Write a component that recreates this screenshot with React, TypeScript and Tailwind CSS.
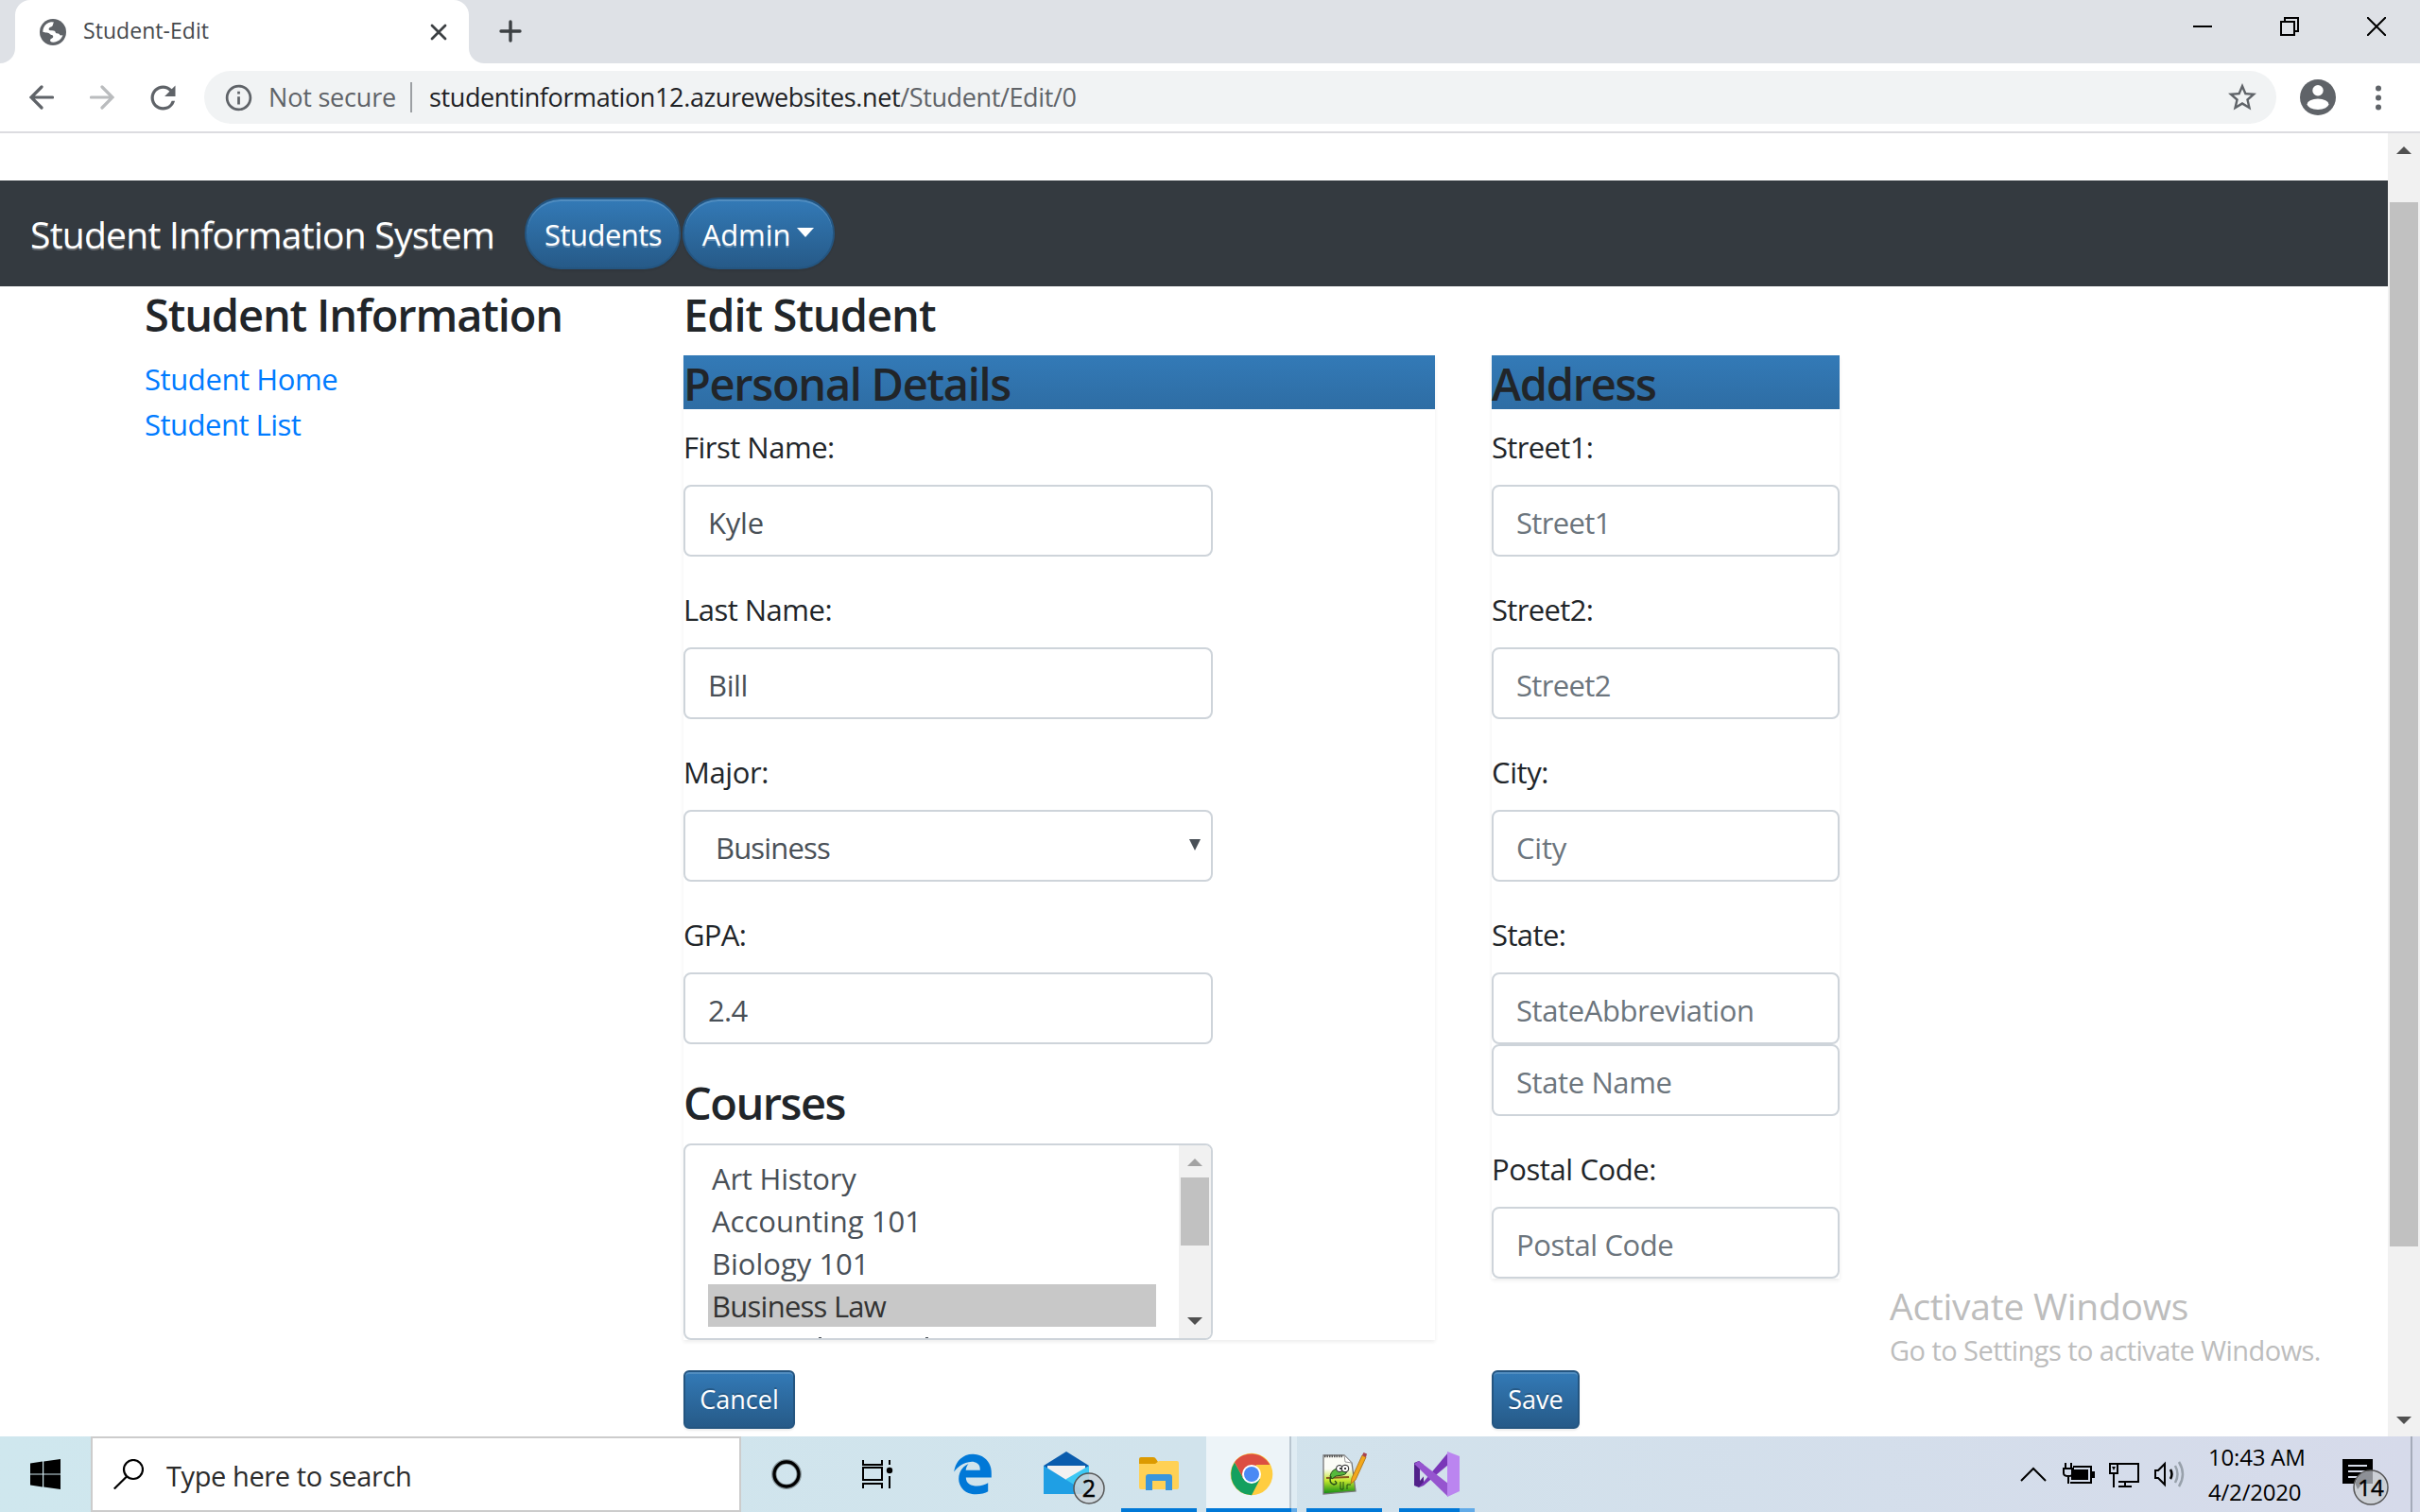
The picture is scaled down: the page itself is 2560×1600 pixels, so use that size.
import type { ReactNode } from "react";
import { MdInfoOutline, MdRefresh, MdStarBorder } from "react-icons/md";
import { FaEdgeLegacy } from "react-icons/fa6";

function Heading({ children, className = "" }: { children: ReactNode; className?: string }) {
  return <h4 className={`whitespace-nowrap text-[47px] leading-[60px] font-semibold ${className}`}>{children}</h4>;
}

function Label({ children, className = "" }: { children: ReactNode; className?: string }) {
  return <label className={`mb-4 block h-12 leading-[49px] whitespace-nowrap ${className}`}>{children}</label>;
}

function Box({ children, className = "" }: { children: ReactNode; className?: string }) {
  return (
    <div
      className={`flex h-[76px] items-center rounded-lg border-2 border-[#ced4da] bg-white pt-1 pl-6 whitespace-nowrap ${className}`}
    >
      {children}
    </div>
  );
}

function TabStrip() {
  return (
    <div className="flex h-[67px] bg-[#dee1e6]">
      <svg className="h-4 w-4 self-end" viewBox="0 0 16 16">
        <path d="M16 0V16H0A16 16 0 0 0 16 0Z" fill="#fff" />
      </svg>
      <div className="flex w-[480px] items-center rounded-t-2xl bg-white pl-[26px]">
        <svg className="h-7 w-7" viewBox="0 0 28 28">
          <circle cx="14" cy="14" r="14" fill="#5f6368" />
          <path
            d="M4.200 9.300C5.500 6.200 8.500 4 12 3.300L15 3.400C14 5 14.200 6 13.600 7.200C12.500 9 10 8.500 9.600 10.500C9.400 12 11 12.200 13 12.300C15.500 12.400 16.500 13 16.800 14.500C17.500 16 20.500 14.800 21 16.600C21.300 18 24 17.500 24.400 17C23.300 21.300 19.300 24.600 14.300 24.700C12 24.700 10.500 23.500 11.200 22C12 20.500 14.500 20.500 14.200 18.500C13.900 16.500 11.500 17.300 10.500 15.800C9.600 14.400 6 15 3.300 13.800C3.300 12 3.600 10.600 4.200 9.300Z"
            fill="#fff"
          />
        </svg>
        <span className="ml-[18px] pb-[2px] text-[23px] tracking-[0.05px] text-[#45494d]">Student-Edit</span>
        <svg className="mr-[23px] ml-auto h-[18px] w-[18px]" viewBox="0 0 18 18" stroke="#3c4043" strokeWidth="2.8" strokeLinecap="round">
          <path d="M2 2L16 16M16 2L2 16" />
        </svg>
      </div>
      <svg className="h-4 w-4 self-end" viewBox="0 0 16 16">
        <path d="M0 0V16H16A16 16 0 0 1 0 0Z" fill="#fff" />
      </svg>
      <svg className="mt-[21px] ml-4 h-6 w-6" viewBox="0 0 24 24" stroke="#3c4043" strokeWidth="3.4" strokeLinecap="round">
        <path d="M12 2V22M2 12H22" />
      </svg>
      <div className="mt-[18px] mr-9 ml-auto flex gap-[72px]">
        <svg className="h-5 w-5" viewBox="0 0 20 20" stroke="#000" strokeWidth="2">
          <path d="M0 10H20" />
        </svg>
        <svg className="h-5 w-5" viewBox="0 0 20 20" stroke="#000" strokeWidth="2" fill="none">
          <path d="M1 5H15V19H1ZM5 5V1H19V15H15" />
        </svg>
        <svg className="h-5 w-5" viewBox="0 0 20 20" stroke="#000" strokeWidth="2">
          <path d="M0 0L20 20M20 0L0 20" />
        </svg>
      </div>
    </div>
  );
}

function Toolbar() {
  return (
    <div className="flex h-[74px] items-center border-b-2 border-[#dcdce0] bg-white pl-[31px]">
      <svg className="h-[26px] w-[26px]" viewBox="0 0 26 26" fill="none" stroke="#5f6368" strokeWidth="3.200" strokeLinecap="round">
        <path d="M24.500 13H2M13 2L2 13L13 24" />
      </svg>
      <svg className="ml-[38px] h-[26px] w-[26px]" viewBox="0 0 26 26" fill="none" stroke="#babcbe" strokeWidth="3.200" strokeLinecap="round">
        <path d="M1.500 13H24M13 2L24 13L13 24" />
      </svg>
      <MdRefresh className="ml-[32px] text-[39px] text-[#5f6368]" />
      <div className="ml-6 flex h-14 w-[2192px] items-center rounded-full bg-[#f1f3f4] text-[27px]">
        <MdInfoOutline className="ml-[20px] text-[33px] text-[#5f6368]" />
        <span className="ml-[15px] w-[150px] tracking-[-0.2px] text-[#5f6368]">Not secure</span>
        <span className="h-8 w-[2px] bg-[#9c9fa3]" />
        <span className="ml-[18px] tracking-[-0.38px] text-[#5f6368]">
          <span className="text-[#202124]">studentinformation12.azurewebsites.net</span>/Student/Edit/0
        </span>
        <MdStarBorder className="mr-[18px] ml-auto text-[36px] text-[#5f6368]" />
      </div>
      <svg className="ml-[25px] h-[38px] w-[38px]" viewBox="0 0 38 38">
        <circle cx="19" cy="19" r="19" fill="#5f6368" />
        <circle cx="19" cy="11.700" r="5.700" fill="#fff" />
        <ellipse cx="19" cy="26.300" rx="11.400" ry="5.700" fill="#fff" />
      </svg>
      <svg className="ml-[42px] h-[27px] w-[6px]" viewBox="0 0 6 27" fill="#5f6368">
        <circle cx="3" cy="3.500" r="3" />
        <circle cx="3" cy="13.500" r="3" />
        <circle cx="3" cy="23.500" r="3" />
      </svg>
    </div>
  );
}

const blueButton =
  "flex items-center justify-center border-2 border-[#245580] bg-linear-to-b from-[#337ab7] to-[#265a88] text-white shadow-[inset_0_2px_0_rgba(255,255,255,0.15),0_2px_2px_rgba(0,0,0,0.075)]";

function Navbar() {
  return (
    <nav className="flex h-28 items-center bg-[#343a40] pl-8 text-white [text-shadow:0_2px_0_rgba(255,255,255,0.25)]">
      <span className="w-[523px] pt-[2px] text-[39px] tracking-[-0.75px] whitespace-nowrap">Student Information System</span>
      <div className={`h-[76px] w-[165px] rounded-full pt-[2px] pl-px tracking-[-0.55px] ${blueButton}`}>Students</div>
      <div className={`ml-[2px] h-[76px] w-[161px] rounded-full pt-[2px] pr-px tracking-[-0.1px] ${blueButton}`}>
        Admin
        <svg className="mb-[4px] ml-[7px] h-[10px] w-[18px]" viewBox="0 0 18 10">
          <path d="M0 0H18L9 10Z" fill="#fff" />
        </svg>
      </div>
    </nav>
  );
}

const bar = "mb-4 h-[57px] bg-linear-to-b from-[#337ab7] to-[#2e6da4]";
const fieldset = "shadow-[0_2px_4px_rgba(0,0,0,0.075)]";

const courses = [
  { name: "Art History", className: "tracking-[-0.2px]" },
  { name: "Accounting 101", className: "" },
  { name: "Biology 101", className: "" },
  { name: "Business Law", className: "bg-[#c8c8c8] tracking-[-0.75px] text-[#333]" },
];

function CourseList() {
  return (
    <div className="flex h-[208px] w-[560px] overflow-hidden rounded-lg border-2 border-[#ced4da] bg-white tracking-normal text-[#495057]">
      <div className="mt-3 mr-6 ml-6 flex-1">
        {courses.map((c) => (
          <div key={c.name} className={`h-[45px] pl-[4px] leading-[47px] ${c.className}`}>
            {c.name}
          </div>
        ))}
        <div className="mt-[11px] flex h-px pl-[117px]">
          <span className="w-[3px] bg-[#495057]" />
          <span className="ml-[110px] w-[3px] bg-[#495057]" />
        </div>
      </div>
      <div className="flex w-[34px] flex-col items-center bg-[#f1f1f1]">
        <svg className="mt-[14px] h-2 w-4" viewBox="0 0 16 8">
          <path d="M0 8H16L8 0Z" fill="#a3a3a3" />
        </svg>
        <div className="mt-3 h-[72px] w-[30px] bg-[#c1c1c1]" />
        <svg className="mt-auto mb-[14px] h-2 w-4" viewBox="0 0 16 8">
          <path d="M0 0H16L8 8Z" fill="#505050" />
        </svg>
      </div>
    </div>
  );
}

function PersonalDetails() {
  return (
    <section className={`w-[795px] ${fieldset}`}>
      <Heading className={`tracking-[-1.3px] ${bar}`}>Personal Details</Heading>
      <Label className="tracking-[-0.5px]">First Name:</Label>
      <Box className="mb-8 w-[560px] tracking-[-0.2px] text-[#495057]">Kyle</Box>
      <Label className="tracking-[-0.5px]">Last Name:</Label>
      <Box className="mb-8 w-[560px] text-[#495057]">Bill</Box>
      <Label>Major:</Label>
      <Box className="mb-8 w-[560px] text-[#495057]">
        <span className="ml-[8px] tracking-[-0.85px]">Business</span>
        <svg className="mr-[11px] mb-[6px] ml-auto h-3 w-3" viewBox="0 0 12 12">
          <path d="M0 0H12L6 12Z" fill="#495057" />
        </svg>
      </Box>
      <Label className="tracking-[-0.7px]">GPA:</Label>
      <Box className="mb-8 w-[560px] tracking-[-0.7px] text-[#495057]">2.4</Box>
      <Heading className="mb-4 h-[57px] tracking-[-1.5px]">Courses</Heading>
      <CourseList />
    </section>
  );
}

function Address() {
  return (
    <section className={`ml-[60px] w-[368px] self-start ${fieldset}`}>
      <Heading className={`tracking-[-1.3px] ${bar}`}>Address</Heading>
      <Label className="tracking-[-0.65px]">Street1:</Label>
      <Box className="mb-8 tracking-[-0.65px] text-[#6c757d]">Street1</Box>
      <Label className="tracking-[-0.65px]">Street2:</Label>
      <Box className="mb-8 tracking-[-0.65px] text-[#6c757d]">Street2</Box>
      <Label>City:</Label>
      <Box className="mb-8 tracking-[-0.2px] text-[#6c757d]">City</Box>
      <Label className="tracking-[-0.6px]">State:</Label>
      <Box className="text-[#6c757d]">StateAbbreviation</Box>
      <Box className="mb-8 text-[#6c757d]">State Name</Box>
      <Label>Postal Code:</Label>
      <Box className="text-[#6c757d]">Postal Code</Box>
    </section>
  );
}

const actionButton = `h-[62px] rounded-md pt-px text-[27px] tracking-normal [text-shadow:0_-2px_0_rgba(0,0,0,0.2)] ${blueButton}`;

function Page() {
  return (
    <div className="relative flex h-[1379px] bg-white">
      <div className="flex w-[2526px] flex-col pt-[50px] text-[31px] text-[#212529]">
        <Navbar />
        <div className="flex pl-[153px] tracking-[-0.4px]">
          <aside className="w-[570px]">
            <Heading className="mb-4 h-[57.6px] tracking-[-1.15px]">Student Information</Heading>
            <ul className="leading-[48px] text-[#007bff]">
              <li>Student Home</li>
              <li className="tracking-[-0.5px]">Student List</li>
            </ul>
          </aside>
          <main>
            <Heading className="mb-4 h-[57px] tracking-[-1px]">Edit Student</Heading>
            <div className="flex">
              <PersonalDetails />
              <Address />
            </div>
            <div className="mt-8 flex">
              <button className={`w-[118px] ${actionButton}`}>Cancel</button>
              <button className={`ml-[737px] w-[93px] ${actionButton}`}>Save</button>
            </div>
          </main>
        </div>
      </div>
      <div className="flex w-[34px] flex-col items-center bg-[#f1f1f1]">
        <svg className="mt-[14px] h-2 w-4" viewBox="0 0 16 8">
          <path d="M0 8H16L8 0Z" fill="#505050" />
        </svg>
        <div className="mt-[51px] h-[1105px] w-[30px] bg-[#c1c1c1]" />
        <svg className="mt-auto mb-[13px] h-2 w-4" viewBox="0 0 16 8">
          <path d="M0 0H16L8 8Z" fill="#505050" />
        </svg>
      </div>
      <div className="absolute top-[1213px] left-[1999px] whitespace-nowrap text-[#bdbdbd]">
        <div className="h-[55px] text-[39px] leading-[56px] tracking-[-0.25px]">Activate Windows</div>
        <div className="text-[29px] leading-[40px] tracking-[-0.55px]">Go to Settings to activate Windows.</div>
      </div>
    </div>
  );
}

function Cell({ children }: { children: ReactNode }) {
  return (
    <svg className="h-20 w-[98px] shrink-0" viewBox="0 0 98 80">
      {children}
    </svg>
  );
}

function Taskbar() {
  return (
    <div className="flex h-20 bg-linear-to-r from-[#cfe7ee] via-[#d1e3ec] via-50% to-[#d6daea]">
      <div className="flex w-24 items-center justify-center">
        <svg className="h-8 w-8" viewBox="0 0 32 32">
          <path d="M0 4.500L13 2.600V15.400H0ZM14.200 2.400L32 0V15.400H14.200ZM0 16.600H13V29.400L0 27.500ZM14.200 16.600H32V32L14.200 29.600Z" />
        </svg>
      </div>
      <div className="flex w-[688px] items-center border-2 border-[#ccc] bg-white pl-[22px]">
        <svg className="h-8 w-8" viewBox="0 0 32 32" fill="none" stroke="#000" strokeWidth="2.200">
          <circle cx="21" cy="11" r="10" />
          <path d="M14 18.500L0.800 31.500" />
        </svg>
        <span className="ml-6 pt-[3px] text-[29px] tracking-[-0.4px] text-[#2b2b2b]">Type here to search</span>
      </div>
      <Cell>
        <circle cx="48" cy="40" r="13.200" fill="none" stroke="#8b9a9f" strokeWidth="5.500" />
        <circle cx="48" cy="40" r="13" fill="none" stroke="#000" strokeWidth="3.300" />
      </Cell>
      <Cell>
        <g fill="none" stroke="#000" strokeWidth="2">
          <path d="M31 25V30H51V25M31 33H51V46H31ZM31 55V50H51V55M59 25V30M59 42V55" />
        </g>
        <circle cx="59" cy="36" r="3.200" />
      </Cell>
      <div className="flex w-[98px] items-center justify-center">
        <FaEdgeLegacy className="text-[44px] text-[#0078d7]" />
      </div>
      <Cell>
        <path d="M26 31L50 16L74 31V40H26Z" fill="#0a5cad" />
        <path d="M30 31H70V45L50 56L30 45Z" fill="#f2f2f2" />
        <path d="M74 31V61H40L50 45Z" fill="#3cc8f4" />
        <path d="M26 31L74 61H26Z" fill="#1f9fe4" />
        <circle cx="74" cy="55" r="16" fill="#ccd3d9" fillOpacity="0.85" stroke="#555" strokeWidth="1.500" />
        <text x="74" y="64" textAnchor="middle" fontSize="25" fontWeight="500" stroke="#000" strokeWidth="0.500">2</text>
      </Cell>
      <Cell>
        <path d="M29 24q0-2 2-2H44q2 0 3 2l2 3v3H29Z" fill="#dc9a00" />
        <path d="M29 29H46l4-3H69q2 0 2 2V54q0 2-2 2H31q-2 0-2-2Z" fill="#ffd155" />
        <path d="M36 57V43q0-3 3-3H61q3 0 3 3V57H57V47H43V57Z" fill="#3a96dd" />
        <path d="M10 76H90V80H10Z" fill="#0078d7" />
      </Cell>
      <Cell>
        <path d="M2 0H90V80H2Z" fill="#edf4f8" />
        <path d="M90 0H92V80H90Z" fill="#b9c6d0" />
        <path d="M92 0H98V80H92Z" fill="#dfecf3" />
        <circle cx="50" cy="40" r="22.300" fill="#ffcd40" />
        <path d="M32 27.500A22.300 22.300 0 0 0 50 62.300L59 45L50 40L41 44Z" fill="#14a05f" />
        <path d="M32 27.200L41.500 45L50 40L55 30H69.300A22.300 22.300 0 0 0 32 27.200Z" fill="#dc4e41" />
        <circle cx="50" cy="40" r="10" fill="#fff" />
        <circle cx="50" cy="40" r="8" fill="#4a8af4" />
        <path d="M2 76H92V80H2Z" fill="#0078d7" />
        <path d="M92 76H98V80H92Z" fill="#62abe8" />
      </Cell>
      <Cell>
        <defs>
          <linearGradient id="pad" x1="0" y1="0" x2="0" y2="1">
            <stop offset="0.350" stopColor="#fbfcf6" />
            <stop offset="0.650" stopColor="#c5e82e" />
            <stop offset="1" stopColor="#0b8a12" />
          </linearGradient>
        </defs>
        <path d="M28 20H50L58 28L62 58L28 61Z" fill="url(#pad)" stroke="#777" strokeWidth="1.300" />
        <path d="M50 20L51 27L58 28Z" fill="#fff" stroke="#999" />
        <path d="M29 21H49" stroke="#555" strokeWidth="2.500" strokeDasharray="1.500 1" />
        <path d="M31 44L55 43" stroke="#8a5a1e" strokeWidth="2" />
        <path d="M35 42Q37 34 44 34L52 35Q54 40 48 41L41 42L37 45Z" fill="#55b93c" stroke="#274d18" />
        <path d="M36 42Q33 49 39 51Q44 50 40 47" fill="none" stroke="#274d18" strokeWidth="1.500" />
        <circle cx="45" cy="34" r="3.500" fill="#fff" stroke="#222" />
        <circle cx="51" cy="34" r="3.800" fill="#fff" stroke="#222" />
        <circle cx="46" cy="34" r="1" />
        <circle cx="51" cy="34" r="1" />
        <path d="M46 48V56H49V48M53 56V51H57" fill="none" stroke="#234c12" />
        <path d="M57 50L58 44L69 20L73 22L62 46Z" fill="#f3a81c" stroke="#a56a10" strokeWidth="0.800" />
        <path d="M69 20L70.500 17L74 18.500L73 22Z" fill="#a8434f" />
        <path d="M10 76H90V80H10Z" fill="#0078d7" />
      </Cell>
      <Cell>
        <path d="M26 28L31 26L36 30V50L31 54L26 52Z" fill="#52218a" />
        <path d="M32 33L38 40L32 47Z" fill="#d2e0eb" />
        <path d="M31 54L62 17V30L36 52Z" fill="#7a36b8" />
        <path d="M31 26L62 50V64L26 29Z" fill="#9655cf" />
        <path d="M61 16L74 21V58L61 64Z" fill="#bb85f0" />
        <path d="M10 76H74V80H10Z" fill="#0078d7" />
        <path d="M74 76H90V80H74Z" fill="#62abe8" />
      </Cell>
      <svg className="ml-auto h-20 w-[200px] shrink-0" viewBox="2128 0 200 80" fill="none" stroke="#000" strokeWidth="2">
        <path d="M2138 47L2151 34L2164 47" />
        <path d="M2193 32H2212V49H2190" />
        <path d="M2191 35H2209V46H2191Z" fill="#000" stroke="none" />
        <path d="M2213 37h3v7h-3z" fill="#000" stroke="none" />
        <path d="M2183 34H2193V39Q2193 42 2188 42Q2183 42 2183 39ZM2185 33V28M2191 33V28M2188 42V50" />
        <path d="M2241 29H2262V48H2241M2236 48V40M2232 29H2240V39H2232ZM2248 49V53M2241 53H2255M2236 40V54" />
        <path d="M2234 32h4l-2 4z" fill="#000" stroke="none" />
        <path d="M2280 36H2283L2290 29V51L2283 44H2280Z" />
        <path d="M2296 35Q2299 40 2296 45" strokeWidth="2.500" />
        <path d="M2301 31Q2306 40 2301 49M2305 27Q2313 40 2305 53" stroke="#98a1ab" strokeWidth="2.500" />
      </svg>
      <div className="w-[130px] pt-[3px] pl-[8px] text-[24px] leading-[37px] tracking-[-0.2px] text-black">
        <div>10:43 AM</div>
        <div>4/2/2020</div>
      </div>
      <svg className="h-20 w-[102px] shrink-0" viewBox="2458 0 102 80">
        <path d="M2478 24H2510V50H2499L2493 56V50H2478Z" />
        <path d="M2484 31H2504M2484 37H2504M2484 43H2504" stroke="#d6dbe8" strokeWidth="2" />
        <circle cx="2508" cy="54" r="18" fill="#ccd0d6" stroke="#555" strokeWidth="1.500" />
        <path d="M2491.500 50L2494 56L2499 50H2510V37H2504Q2494 39 2491.500 50Z" fill="#8d9096" />
        <text x="2508" y="62.500" textAnchor="middle" fontSize="24" fontWeight="500" stroke="#000" strokeWidth="0.500">14</text>
        <path d="M2551 0V80" stroke="#a5abb9" strokeWidth="2" />
      </svg>
    </div>
  );
}

export default function App() {
  return (
    <div className="h-[1600px] w-[2560px] overflow-hidden bg-white font-['Open_Sans',sans-serif]">
      <TabStrip />
      <Toolbar />
      <Page />
      <Taskbar />
    </div>
  );
}
